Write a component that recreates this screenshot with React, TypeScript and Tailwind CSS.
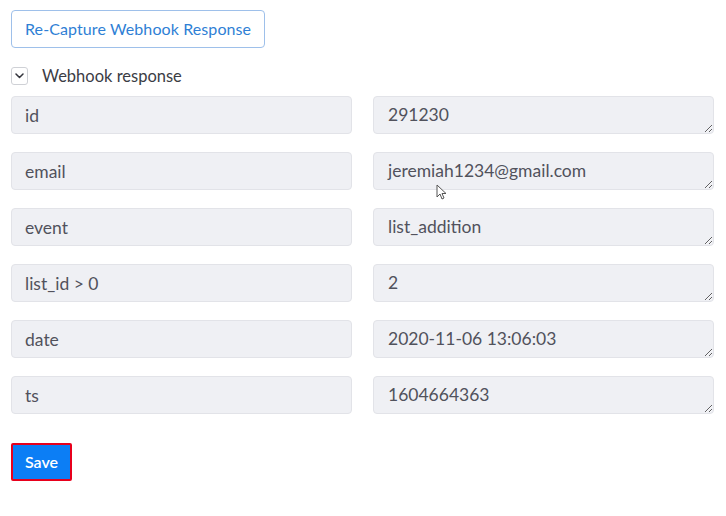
import React from 'react';

const rows = [
  { key: 'id', value: '291230' },
  { key: 'email', value: 'jeremiah1234@gmail.com' },
  { key: 'event', value: 'list_addition' },
  { key: 'list_id > 0', value: '2' },
  { key: 'date', value: '2020-11-06 13:06:03' },
  { key: 'ts', value: '1604664363' },
];

const App = () => {
  return (
    <div className="relative w-[726px] h-[516px] bg-white font-['Lato',sans-serif] text-[#4b4c57] overflow-hidden">
      <div className="pt-[10px] pl-[11px] pr-[12px]">
        <button className="h-[38px] px-[13px] rounded-[4px] border border-[#9ec0ea] text-[#2f7fd5] text-[16px] tracking-[0.1px] bg-white">
          Re-Capture Webhook Response
        </button>

        <div className="flex items-center gap-[14px] mt-[18px] h-[20px]">
          <span className="flex items-center justify-center w-[17px] h-[18px] rounded-[3px] border border-[#cfd1d6] bg-white">
            <svg width="9" height="6" viewBox="0 0 9 6" fill="none">
              <path d="M1 1l3.5 3.5L8 1" stroke="#33343c" strokeWidth="1.5" strokeLinecap="round" strokeLinejoin="round" />
            </svg>
          </span>
          <span className="text-[16.5px] text-[#3b3c44]">Webhook response</span>
        </div>

        <div className="mt-[10px] flex flex-col gap-[18px]">
          {rows.map((row) => (
            <div key={row.key} className="grid grid-cols-[341px_341px] gap-[21px]">
              <input
                readOnly
                value={row.key}
                className="h-[38px] px-[13px] rounded-[4px] border border-[#e2e3e8] bg-[#eff0f4] text-[17.5px] text-[#51525c] outline-none"
              />
              <textarea
                readOnly
                rows={1}
                value={row.value}
                className="h-[38px] px-[14px] py-[7px] leading-[22px] rounded-[4px] border border-[#e2e3e8] bg-[#eff0f4] text-[17.5px] text-[#51525c] outline-none overflow-hidden"
              />
            </div>
          ))}
        </div>

        <button className="mt-[29px] h-[38px] w-[61px] rounded-[2px] border-2 border-[#e8001c] bg-[#0c7ef5] text-white text-[16px] font-semibold">
          Save
        </button>
      </div>

      <svg className="absolute left-[436px] top-[184px]" width="11" height="16" viewBox="0 0 11 16">
        <path d="M1 1v12l3-3 2 5 2-1-2-4.5h4z" fill="white" stroke="#555" strokeWidth="1" strokeLinejoin="round" />
      </svg>
    </div>
  );
};

export default App;
